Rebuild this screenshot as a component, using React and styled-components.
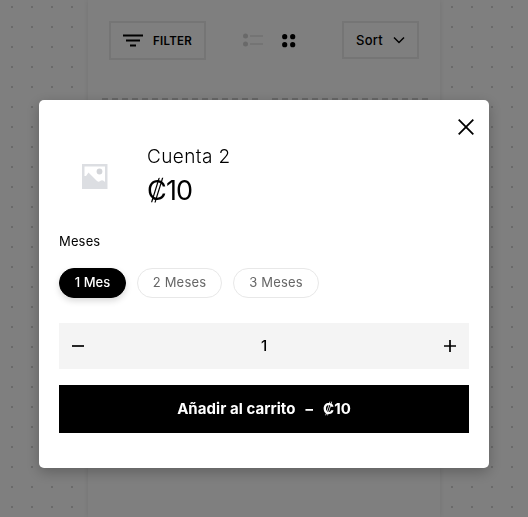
import React, { useState } from 'react';
import styled, { createGlobalStyle } from 'styled-components';

const GlobalStyle = createGlobalStyle`
  * {
    box-sizing: border-box;
  }

  body {
    margin: 0;
    overflow: hidden;
    font-family: Inter, 'Liberation Sans', sans-serif;
    color: #000;
  }

  button {
    margin: 0;
    padding: 0;
    border: 0;
    background: none;
    font-family: inherit;
    color: inherit;
    cursor: pointer;
  }

  svg {
    display: block;
    flex: none;
  }
`;

const Page = styled.div`
  display: flex;
  justify-content: center;
  height: 100vh;
  background: radial-gradient(
      circle at 1px 1px,
      #d4d4d4 1.4px,
      transparent 1.4px
    )
    11px 6px / 20px 20px #fff;
`;

const Shop = styled.main`
  width: 352px;
  background: #fff;
  box-shadow: 0 0 6px rgba(0, 0, 0, 0.1);
`;

const Toolbar = styled.div`
  display: flex;
  align-items: flex-start;
  padding: 21px 21px 0;
`;

const ToolButton = styled.button`
  display: flex;
  align-items: center;
  width: ${(props) => props.$width}px;
  height: ${(props) => props.$height}px;
  padding-left: 12px;
  gap: 10px;
  border: 2px solid #ebebeb;
  font-size: ${(props) => props.$size}px;
  font-weight: ${(props) => props.$weight};
  letter-spacing: 0.25px;
`;

const ViewSwitch = styled.div`
  display: flex;
  align-items: center;
  gap: 19px;
  height: 39px;
  margin: 0 auto 0 37px;

  svg:first-child {
    margin-bottom: 2px;
  }
`;

const Products = styled.div`
  display: flex;
  gap: 14px;
  margin-top: 38px;
  padding: 0 12px 0 14px;
`;

const ProductEdge = styled.div`
  flex: 1;
  height: 2px;
  background: repeating-linear-gradient(
    90deg,
    #cfcfcf 0 6px,
    transparent 6px 10px
  );
`;

const Overlay = styled.div`
  position: fixed;
  inset: 0;
  display: flex;
  justify-content: center;
  align-items: flex-start;
  padding-top: 99.6px;
  background: rgba(0, 0, 0, 0.5);
`;

const Modal = styled.section`
  position: relative;
  width: 450px;
  height: 368px;
  padding: 44.4px 20px 0;
  border-radius: 5px;
  background: #fff;
  box-shadow: 0 4px 14px rgba(0, 0, 0, 0.25);
`;

const CloseButton = styled.button`
  position: absolute;
  top: 19.4px;
  right: 15px;
`;

const Product = styled.div`
  display: flex;
  height: 66px;
`;

const Thumb = styled.div`
  width: 88px;
  padding: 20px 0 0 23px;
`;

const Name = styled.h2`
  margin: 0;
  font-size: 19px;
  line-height: 25px;
  font-weight: 350;
  letter-spacing: 0.4px;
`;

const Price = styled.div`
  margin-top: 4px;
  font-size: 27px;
  line-height: 36px;
  font-weight: 400;
  letter-spacing: -0.8px;
`;

const Label = styled.div`
  margin-top: 21px;
  font-size: 13px;
  line-height: 20px;
  letter-spacing: 0.15px;
`;

const Options = styled.div`
  display: flex;
  gap: 11px;
  margin-top: 17px;
`;

const Option = styled.button`
  width: ${(props) => props.$width}px;
  height: 30px;
  border: 1px solid ${(props) => (props.$active ? '#000' : '#e8e8e8')};
  border-radius: 15px;
  background: ${(props) => (props.$active ? '#000' : '#fff')};
  color: ${(props) => (props.$active ? '#fff' : '#666')};
  font-size: 13px;
  font-weight: ${(props) => (props.$active ? 500 : 400)};
  letter-spacing: ${(props) => (props.$active ? 0 : 0.2)}px;
  line-height: 26px;
  padding-bottom: 2px;
  white-space: nowrap;
  box-shadow: ${(props) =>
    props.$active ? '0 3px 6px rgba(0, 0, 0, 0.15)' : 'none'};
`;

const Quantity = styled.div`
  display: flex;
  align-items: center;
  justify-content: space-between;
  height: 46px;
  margin-top: 25px;
  padding: 0 13px;
  background: #f4f4f4;
  font-size: 15px;
  font-weight: 500;
`;

const AddButton = styled.button`
  display: flex;
  align-items: center;
  justify-content: center;
  gap: 10px;
  width: 100%;
  height: 48px;
  margin-top: 16px;
  background: #000;
  color: #fff;
  font-size: 15px;
  font-weight: 700;
  letter-spacing: 0.05px;
`;

const FilterIcon = () => (
  <svg width="20" height="14" viewBox="0 0 20 14">
    <path d="M0 1.5h20M3 6.500h14M7 11.500h6" stroke="#000" strokeWidth="2" />
  </svg>
);

const ListIcon = () => (
  <svg width="20" height="14" viewBox="0 0 20 14">
    <g fill="#d2d2d2">
      <circle cx="2.5" cy="3" r="2.5" />
      <circle cx="2.5" cy="11" r="2.5" />
      <path d="M7 2.5h13v1H7zM7 10.5h13v1H7z" />
    </g>
  </svg>
);

const GridIcon = () => (
  <svg width="14" height="14" viewBox="0 0 14 14">
    <circle cx="2.7" cy="2.7" r="2.6" />
    <circle cx="10.7" cy="2.7" r="2.6" />
    <circle cx="2.7" cy="10.7" r="2.6" />
    <circle cx="10.7" cy="10.7" r="2.6" />
  </svg>
);

const ChevronIcon = () => (
  <svg width="12" height="8" viewBox="0 0 12 8">
    <path d="M1 1.5l5 5 5-5" fill="none" stroke="#000" strokeWidth="1.5" />
  </svg>
);

const CloseIcon = () => (
  <svg width="16" height="16" viewBox="0 0 16 16">
    <path d="M.7.7l14.6 14.6M15.3.7L.7 15.3" stroke="#000" strokeWidth="1.8" />
  </svg>
);

const PlaceholderImage = () => (
  <svg width="26" height="26" viewBox="0 0 26 26">
    <path d="M0 0h25.5v25H0z" fill="#dcdee2" />
    <path
      d="M2.5 2.5H23v15.5q-2-2.500-4-1.500-2 2-4 .5L6.5 8.5 4 12H2.5z"
      fill="#fff"
    />
    <circle cx="17.5" cy="7.5" r="2.9" fill="#d3d5d9" />
  </svg>
);

const options = [
  { label: '1 Mes', width: 67 },
  { label: '2 Meses', width: 85 },
  { label: '3 Meses', width: 86 },
];

const App = () => {
  const [selected, setSelected] = useState(0);
  const [quantity, setQuantity] = useState(1);

  return (
    <>
      <GlobalStyle />
      <Page>
        <Shop>
          <Toolbar>
            <ToolButton $width={97} $height={39} $size={11.5} $weight={600}>
              <FilterIcon />
              FILTER
            </ToolButton>
            <ViewSwitch>
              <ListIcon />
              <GridIcon />
            </ViewSwitch>
            <ToolButton $width={77} $height={38} $size={13} $weight={550}>
              Sort
              <ChevronIcon />
            </ToolButton>
          </Toolbar>
          <Products>
            <ProductEdge />
            <ProductEdge />
          </Products>
        </Shop>
      </Page>
      <Overlay>
        <Modal>
          <CloseButton aria-label="Cerrar">
            <CloseIcon />
          </CloseButton>
          <Product>
            <Thumb>
              <PlaceholderImage />
            </Thumb>
            <div>
              <Name>Cuenta 2</Name>
              <Price>₡10</Price>
            </div>
          </Product>
          <Label>Meses</Label>
          <Options>
            {options.map((option, index) => (
              <Option
                key={option.label}
                $width={option.width}
                $active={index === selected}
                onClick={() => setSelected(index)}
              >
                {option.label}
              </Option>
            ))}
          </Options>
          <Quantity>
            <button onClick={() => setQuantity(Math.max(1, quantity - 1))}>
              <svg width="12" height="12" viewBox="0 0 12 12">
                <path d="M0 6h12" stroke="#000" strokeWidth="1.7" />
              </svg>
            </button>
            <span>{quantity}</span>
            <button onClick={() => setQuantity(quantity + 1)}>
              <svg width="12" height="12" viewBox="0 0 12 12">
                <path d="M0 6h12M6 0v12" stroke="#000" strokeWidth="1.7" />
              </svg>
            </button>
          </Quantity>
          <AddButton>
            <span>Añadir al carrito</span>
            <span>–</span>
            <span>₡{quantity * 10}</span>
          </AddButton>
        </Modal>
      </Overlay>
    </>
  );
};

export default App;
